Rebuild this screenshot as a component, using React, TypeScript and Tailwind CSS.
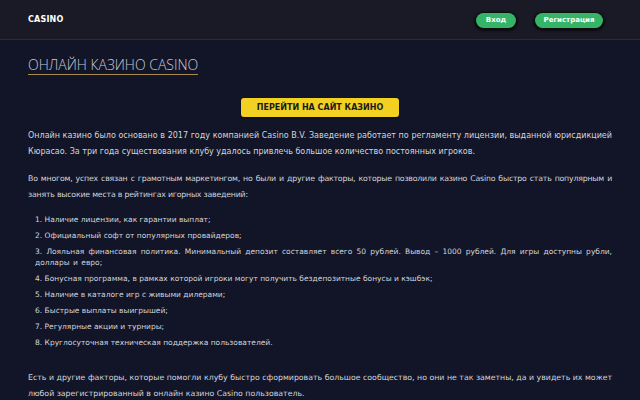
export default function App() {
  const items = [
    "Наличие лицензии, как гарантии выплат;",
    "Официальный софт от популярных провайдеров;",
    "Лояльная финансовая политика. Минимальный депозит составляет всего 50 рублей. Вывод – 1000 рублей. Для игры доступны рубли, доллары и евро;",
    "Бонусная программа, в рамках которой игроки могут получить бездепозитные бонусы и кэшбэк;",
    "Наличие в каталоге игр с живыми дилерами;",
    "Быстрые выплаты выигрышей;",
    "Регулярные акции и турниры;",
    "Круглосуточная техническая поддержка пользователей.",
  ];

  return (
    <div className="min-h-[400px] bg-[#121527] font-['DejaVu_Sans',sans-serif] text-[#d4d5dc]">
      <header className="h-10 flex items-center justify-between px-7 bg-[#1a1a26] border-b border-[#2b2d3d]">
        <span className="text-[8px] font-bold text-white tracking-wide">CASINO</span>
        <div className="flex items-center gap-[19px] pr-[9px] pt-[2px]">
          <button className="h-[15px] w-10 rounded-full bg-[#35b468] text-[7px] font-bold text-white shadow-[0_1px_2px_2px_rgba(0,0,0,0.6)]">
            Вход
          </button>
          <button className="h-[15px] w-[68px] rounded-full bg-[#35b468] text-[7px] font-bold text-white shadow-[0_1px_2px_2px_rgba(0,0,0,0.6)]">
            Регистрация
          </button>
        </div>
      </header>

      <main className="px-7 pt-[13px]">
        <h1 className="inline-block font-['Open_Sans',sans-serif] font-light text-[14px] leading-[17px] text-[#c8c9d2] border-b border-[#a88a4a] pb-[1px]">
          ОНЛАЙН КАЗИНО CASINO
        </h1>

        <div className="flex justify-center mt-[21px]">
          <button className="h-[19px] w-[158px] rounded-[3px] bg-[#f2d122] text-[8px] font-bold text-[#1a1a1a] shadow-[0_1px_2px_rgba(0,0,0,0.5)]">
            ПЕРЕЙТИ НА САЙТ КАЗИНО
          </button>
        </div>

        <p className="mt-[11px] text-[8px] leading-[16px] text-justify">
          Онлайн казино было основано в 2017 году компанией Casino B.V. Заведение работает по регламенту лицензии, выданной юрисдикцией Кюрасао. За три года существования клубу удалось привлечь большое количество постоянных игроков.
        </p>

        <p className="mt-[11px] text-[7.8px] leading-[16px] tracking-[-0.2px] text-justify">
          <span className="block [text-align-last:justify]">
            Во многом, успех связан с грамотным маркетингом, но были и другие факторы, которые позволили казино Casino быстро стать популярным и
          </span>
          занять высокие места в рейтингах игорных заведений:
        </p>

        <ol className="mt-[11px] flex flex-col gap-[5px] text-[7.5px] leading-[11px] text-justify">
          {items.map((t, i) => (
            <li key={i} className={i === 2 ? "pl-[7px] [word-spacing:1px]" : "pl-[7px]"}>
              {i + 1}. {t}
            </li>
          ))}
        </ol>

        <p className="mt-[22px] text-[7.8px] leading-[16px] text-justify">
          Есть и другие факторы, которые помогли клубу быстро сформировать большое сообщество, но они не так заметны, да и увидеть их может любой зарегистрированный в онлайн казино Casino пользователь.
        </p>
      </main>
    </div>
  );
}
